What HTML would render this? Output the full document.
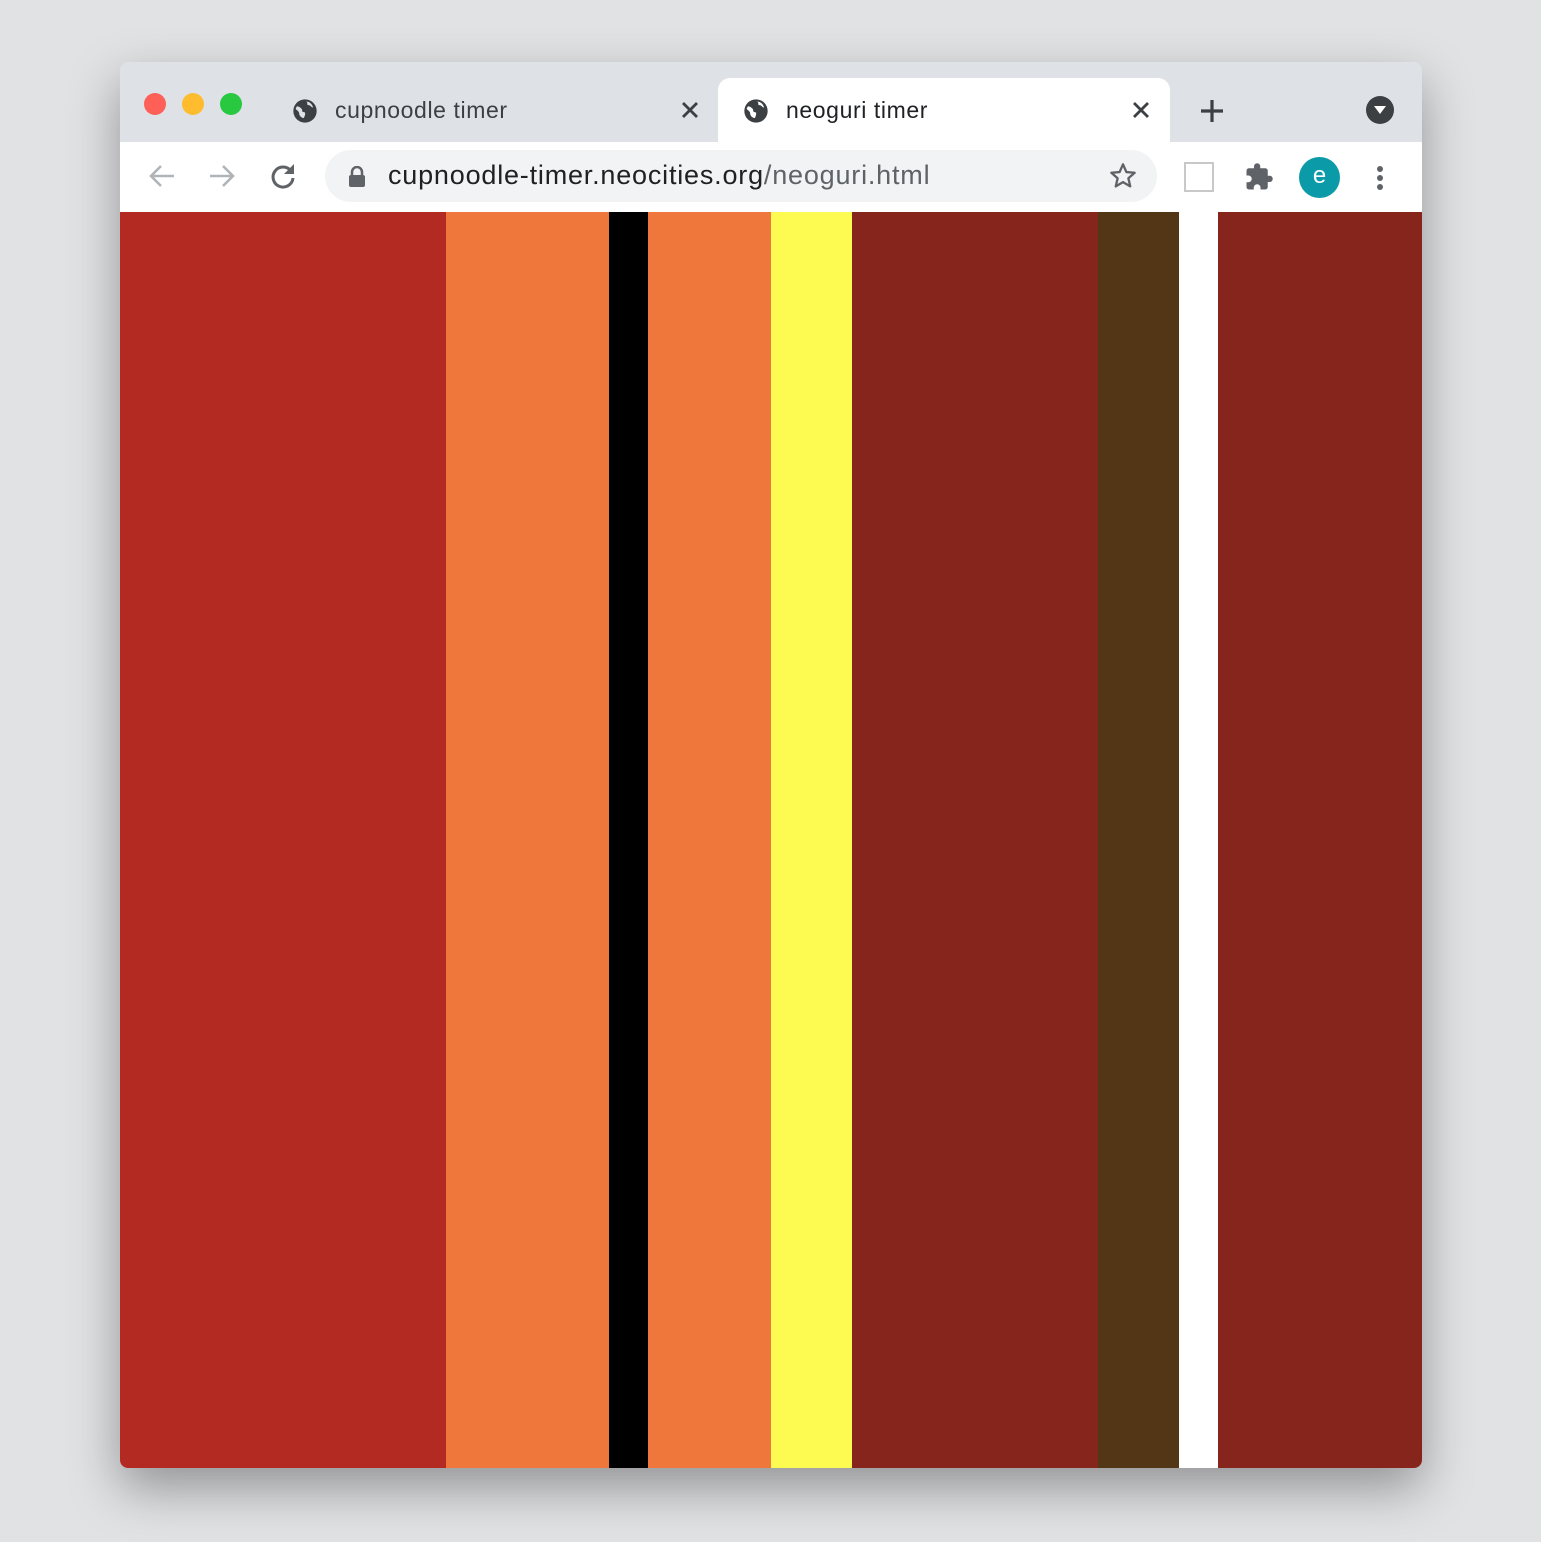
<!DOCTYPE html>
<html><head><style>
body{margin:0;width:1541px;height:1542px;background:#e1e2e4;position:relative;overflow:hidden;font-family:"Liberation Sans",sans-serif}
.win{position:absolute;left:120px;top:62px;width:1302px;height:1406px;border-radius:8px;overflow:hidden;box-shadow:0 20px 50px rgba(0,0,0,.35);background:#dee1e6}
.a{position:absolute}
.dot{position:absolute;top:31px;width:22px;height:22px;border-radius:50%}
.t{position:absolute;font-size:23px;color:#3c4043;letter-spacing:0.6px}
.s{position:absolute;top:150px;height:1256px}
</style></head><body>
<div class="win">
<div class="dot" style="left:24px;background:#fe5f57"></div>
<div class="dot" style="left:62px;background:#febc2e"></div>
<div class="dot" style="left:100px;background:#28c840"></div>
<svg class="a" style="left:171px;top:35px" width="28" height="28" viewBox="0 0 24 24"><circle cx="12" cy="12" r="10" fill="#3c4043"/><path d="M5 8c2 0 3 1 4 2s0 3 2 3 1 3 0 5c-2 0-4-2-4-4S4 11 4 10zM13 4c2 1 0 3 2 3s2 2 4 2c-1-3-3-5-6-5z" fill="#dee1e6"/></svg>
<div class="t" style="left:215px;top:35px">cupnoodle timer</div>
<svg class="a" style="left:560px;top:38px" width="20" height="20"><path d="M3 3l14 14M17 3L3 17" stroke="#3c4043" stroke-width="2.8"/></svg>
<div class="a" style="left:598px;top:16px;width:452px;height:64px;background:#fff;border-radius:12px 12px 0 0"></div>
<svg class="a" style="left:622px;top:35px" width="28" height="28" viewBox="0 0 24 24"><circle cx="12" cy="12" r="10" fill="#3c4043"/><path d="M5 8c2 0 3 1 4 2s0 3 2 3 1 3 0 5c-2 0-4-2-4-4S4 11 4 10zM13 4c2 1 0 3 2 3s2 2 4 2c-1-3-3-5-6-5z" fill="#fff"/></svg>
<div class="t" style="left:666px;top:35px;color:#202124">neoguri timer</div>
<svg class="a" style="left:1011px;top:38px" width="20" height="20"><path d="M3 3l14 14M17 3L3 17" stroke="#3c4043" stroke-width="2.8"/></svg>
<svg class="a" style="left:1079px;top:36px" width="26" height="26"><path d="M13 2v22M2 13h22" stroke="#3c4043" stroke-width="3.2"/></svg>
<svg class="a" style="left:1246px;top:34px" width="28" height="28"><circle cx="14" cy="14" r="14" fill="#3c4043"/><path d="M8 10h12l-6 8z" fill="#fff"/></svg>
<div class="a" style="left:0;top:80px;width:1302px;height:70px;background:#fff"></div>
<svg class="a" style="left:28px;top:102px" width="28" height="24"><path d="M26 12H3M13 2L3 12l10 10" stroke="#b0b3b7" stroke-width="2.6" fill="none"/></svg>
<svg class="a" style="left:88px;top:102px" width="28" height="24"><path d="M2 12h23M15 2l10 10-10 10" stroke="#b0b3b7" stroke-width="2.6" fill="none"/></svg>
<svg class="a" style="left:149px;top:100px" width="28" height="28" viewBox="0 0 28 28"><path d="M22 9A10 10 0 1 0 24 16" stroke="#5f6368" stroke-width="3" fill="none"/><path d="M25 2v10H15z" fill="#5f6368"/></svg>
<div class="a" style="left:205px;top:88px;width:832px;height:52px;background:#f1f3f4;border-radius:26px"></div>
<svg class="a" style="left:228px;top:104px" width="18" height="22"><path d="M4 9V6a5 5 0 0 1 10 0v3" stroke="#5f6368" stroke-width="2.5" fill="none"/><rect x="1" y="9" width="16" height="12" rx="2" fill="#5f6368"/></svg>
<div class="t" style="left:268px;top:98px;font-size:27px;color:#202124;letter-spacing:0.8px">cupnoodle-timer.neocities.org<span style="color:#5f6368">/neoguri.html</span></div>
<svg class="a" style="left:989px;top:100px" width="28" height="28" viewBox="0 0 24 24"><path d="M12 2l2.9 6.6 7.1.6-5.4 4.7 1.6 7-6.2-3.7-6.2 3.7 1.6-7L2 9.2l7.1-.6z" stroke="#5f6368" stroke-width="2" fill="none" stroke-linejoin="round"/></svg>
<div class="a" style="left:1064px;top:100px;width:26px;height:26px;border:2px solid #c8c8c8"></div>
<svg class="a" style="left:1124px;top:100px" width="30" height="30" viewBox="0 0 24 24"><path d="M20.5 11H19V7a2 2 0 0 0-2-2h-4V3.5a2.5 2.5 0 0 0-5 0V5H4a2 2 0 0 0-2 2v3.8h1.5a2.7 2.7 0 0 1 0 5.4H2V20a2 2 0 0 0 2 2h3.8v-1.5a2.7 2.7 0 0 1 5.4 0V22H17a2 2 0 0 0 2-2v-4h1.5a2.5 2.5 0 0 0 0-5z" fill="#5f6368"/></svg>
<div class="a" style="left:1179px;top:95px;width:41px;height:41px;border-radius:50%;background:#0b9aa8;color:#fff;font-size:24px;text-align:center;line-height:38px">e</div>
<div class="a" style="left:1257px;top:104px;width:6px;height:6px;border-radius:50%;background:#5f6368;box-shadow:0 9px #5f6368,0 18px #5f6368"></div>
<div class="s" style="left:0;width:326px;background:#b22a22"></div>
<div class="s" style="left:326px;width:163px;background:#ef773b"></div>
<div class="s" style="left:489px;width:39px;background:#000"></div>
<div class="s" style="left:528px;width:123px;background:#ef773b"></div>
<div class="s" style="left:651px;width:81px;background:#fdfb52"></div>
<div class="s" style="left:732px;width:246px;background:#86251c"></div>
<div class="s" style="left:978px;width:81px;background:#523616"></div>
<div class="s" style="left:1059px;width:39px;background:#fff"></div>
<div class="s" style="left:1098px;width:204px;background:#86251c"></div>
</div>
</body></html>
